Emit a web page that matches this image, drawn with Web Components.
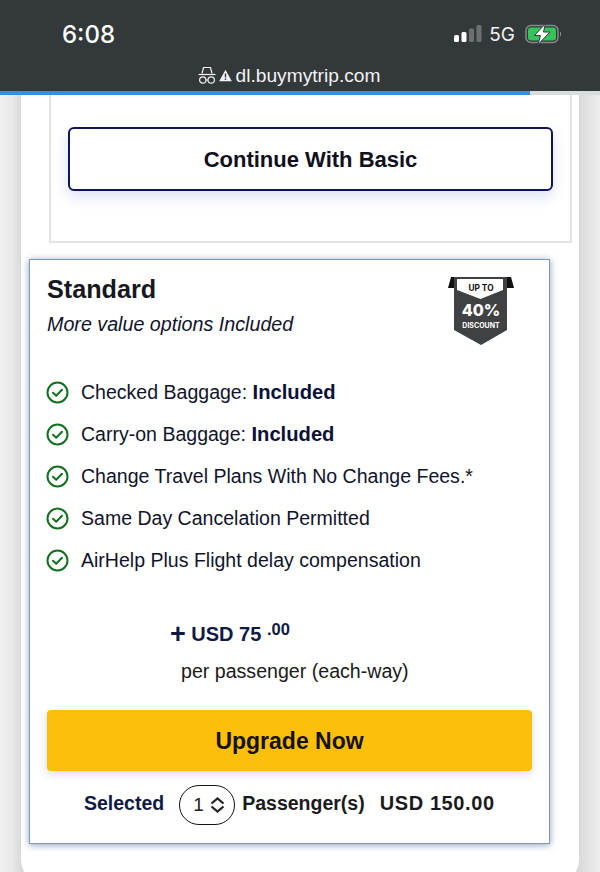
<!DOCTYPE html>
<html>
<head>
<meta charset="utf-8">
<title>Upgrade</title>
<style>
    html, body {
        margin: 0;
        height: 872px;
        overflow: hidden;
    }
    body {
        width: 600px;
        font-family: "Liberation Sans", Arial, sans-serif;
        background: linear-gradient(90deg, #f1f1f1 0, #e9e9e9 12px, #d9d9d9 21px, #d9d9d9 579px, #e4e4e4 590px, #efefef 600px);
    }
</style>
</head>
<body>
<browser-bar time="6:08" host="dl.buymytrip.com"></browser-bar>
<page-sheet>
    <basic-card>Continue With Basic</basic-card>
    <plan-card name="Standard" tagline="More value options Included" price="75" cents="00" total="USD 150.00">
        <feature-item>Checked Baggage: <b>Included</b></feature-item>
        <feature-item>Carry-on Baggage: <b>Included</b></feature-item>
        <feature-item>Change Travel Plans With No Change Fees.*</feature-item>
        <feature-item>Same Day Cancelation Permitted</feature-item>
        <feature-item>AirHelp Plus Flight delay compensation</feature-item>
    </plan-card>
</page-sheet>

<script>
customElements.define('browser-bar', class extends HTMLElement {
    connectedCallback() {
        this.attachShadow({ mode: 'open' });
        this.shadowRoot.innerHTML = `
            <style>
                :host {
                    display: block;
                    color: #fff;
                    background: #33383b;
                    font-family: Inter, "Liberation Sans", sans-serif;
                }
                .status {
                    display: flex;
                    align-items: center;
                    justify-content: space-between;
                    height: 68px;
                    padding: 0 37px 0 62px;
                }
                .time {
                    font-size: 24px;
                    font-weight: 500;
                }
                .right {
                    display: flex;
                    align-items: center;
                    gap: 7px;
                    font-size: 19px;
                    color: #f1f1f1;
                }
                .url {
                    display: flex;
                    align-items: center;
                    justify-content: center;
                    gap: 3px;
                    box-sizing: border-box;
                    height: 23px;
                    padding: 0 21px 8px 0;
                    font: 19.2px "Liberation Sans", sans-serif;
                    color: #f2f2f2;
                }
                .progress {
                    height: 4px;
                    background: linear-gradient(90deg, #3a8fd6 530px, #d8dcdf 530px);
                }
            </style>
            <div class="status">
                <span class="time">${this.getAttribute('time')}</span>
                <span class="right">
                    <svg width="28" height="18" viewBox="0 0 28 18">
                        <rect x="0" y="10" width="5" height="7" rx="1.5" fill="#fff"/>
                        <rect x="7.5" y="7" width="5" height="10" rx="1.5" fill="#fff"/>
                        <rect x="15" y="3.5" width="5" height="13.5" rx="1.5" fill="#6c7072"/>
                        <rect x="22.5" y="0" width="5" height="17" rx="1.5" fill="#6c7072"/>
                    </svg>
                    <span>5G</span>
                    <svg width="38" height="22" viewBox="0 0 38 22" style="margin-left:3px">
                        <rect x="1" y="2.5" width="32" height="17" rx="5" fill="none" stroke="#85898b" stroke-width="1.5"/>
                        <rect x="3" y="4.5" width="28" height="13" rx="3" fill="#35c45a"/>
                        <path d="M35 8.5c1.5 .4 1.5 4.6 0 5z" fill="#85898b"/>
                        <path d="M20.5 0.5L9.5 12.5h6l-2.5 9L25 9h-6.5z" fill="#fff" stroke="#33383b" stroke-width="1"/>
                    </svg>
                </span>
            </div>
            <div class="url">
                <svg width="18" height="19" viewBox="0 0 18 19" fill="none" stroke="#f2f2f2" stroke-width="1.2">
                    <path d="M4 7.5L5.500 1.500h7L14 7.500"/>
                    <path d="M.5 8.500h17"/>
                    <circle cx="4.800" cy="14" r="3.200"/>
                    <circle cx="13.200" cy="14" r="3.200"/>
                    <path d="M8 14h2"/>
                </svg>
                <svg width="13" height="13" viewBox="0 0 13 13">
                    <path d="M6.500 .8L12.800 12.200H.2z" fill="#f2f2f2"/>
                    <path d="M6.500 4.500v4M6.500 9.500v1.500" stroke="#33383b" stroke-width="1.400"/>
                </svg>
                <span>${this.getAttribute('host')}</span>
            </div>
            <div class="progress"></div>
        `;
    }
});

customElements.define('page-sheet', class extends HTMLElement {
    constructor() {
        super();
        this.attachShadow({ mode: 'open' });
        this.shadowRoot.innerHTML = `
            <style>
                :host {
                    display: flex;
                    flex-direction: column;
                    gap: 16px;
                    height: 787px;
                    margin: 0 21px;
                    padding: 0 7px 0 8px;
                    box-sizing: border-box;
                    background: #fff;
                    border-radius: 0 0 22px 22px;
                }
            </style>
            <slot></slot>
        `;
    }
});

customElements.define('basic-card', class extends HTMLElement {
    constructor() {
        super();
        this.attachShadow({ mode: 'open' });
        this.shadowRoot.innerHTML = `
            <style>
                :host {
                    display: block;
                    margin-left: 20px;
                    padding: 32px 17px 50px;
                    border: 2px solid #e2e4e7;
                    border-top: 0;
                }
                button {
                    display: block;
                    width: 100%;
                    height: 64px;
                    padding: 2px 0 0;
                    font: 700 22px "Liberation Sans", sans-serif;
                    color: #10101c;
                    background: #fff;
                    border: 2px solid #11145a;
                    border-radius: 6px;
                    box-shadow: 0 6px 14px rgba(40, 70, 190, .16);
                }
            </style>
            <button><slot></slot></button>
        `;
    }
});

customElements.define('discount-badge', class extends HTMLElement {
    constructor() {
        super();
        this.attachShadow({ mode: 'open' });
        this.shadowRoot.innerHTML = `
            <style>
                :host {
                    display: block;
                    width: 66px;
                    height: 69px;
                }
                svg {
                    display: block;
                }
                text {
                    font-family: Inter, "Liberation Sans", sans-serif;
                    font-weight: 700;
                    text-anchor: middle;
                }
            </style>
            <svg width="66" height="69" viewBox="0 0 66 69">
                <path d="M0 11L3 0h60l3 11z" fill="#111"/>
                <path d="M6 0h53v53L33 68 6 53z" fill="#3f4142"/>
                <path d="M9 2h46v11L32.500 22 9 13z" fill="#fff"/>
                <text x="33" y="14" font-size="8.300" fill="#111">UP TO</text>
                <text x="33" y="39" font-size="16" style="font-weight:800" fill="#fff">40%</text>
                <text x="33" y="51" font-size="7" fill="#fff">DISCOUNT</text>
            </svg>
        `;
    }
});

customElements.define('feature-item', class extends HTMLElement {
    constructor() {
        super();
        this.attachShadow({ mode: 'open' });
        this.shadowRoot.innerHTML = `
            <style>
                :host {
                    display: flex;
                    align-items: center;
                    gap: 12px;
                    height: 42px;
                    font-size: 19.55px;
                    color: #11132b;
                }
                svg {
                    flex: none;
                    margin-left: -1px;
                }
                ::slotted(b) {
                    color: #0b1038;
                    font-size: 20.2px;
                }
            </style>
            <svg width="23" height="23" viewBox="0 0 23 23" fill="none" stroke="#12701f" stroke-width="2">
                <circle cx="11.500" cy="11.500" r="10"/>
                <path d="M7 11.800l3.200 3 5.800-6" stroke-linecap="round" stroke-linejoin="round"/>
            </svg>
            <span><slot></slot></span>
        `;
    }
});

customElements.define('pax-select', class extends HTMLElement {
    constructor() {
        super();
        this.attachShadow({ mode: 'open' });
        this.shadowRoot.innerHTML = `
            <style>
                :host {
                    display: inline-flex;
                    align-items: center;
                    gap: 6px;
                    box-sizing: border-box;
                    width: 56px;
                    height: 40px;
                    padding-left: 13px;
                    font-size: 19px;
                    font-weight: 400;
                    color: #222;
                    border: 1.3px solid #111;
                    border-radius: 20px;
                }
            </style>
            <span>1</span>
            <svg width="15" height="16" viewBox="0 0 15 16" fill="none" stroke="#222" stroke-width="2.200">
                <path d="M1.500 6.500L7.500 1.500l6 5M1.500 9.500l6 5 6-5"/>
            </svg>
        `;
    }
});

customElements.define('plan-card', class extends HTMLElement {
    connectedCallback() {
        this.attachShadow({ mode: 'open' });
        this.shadowRoot.innerHTML = `
            <style>
                :host {
                    display: block;
                    box-sizing: border-box;
                    width: 521px;
                    height: 585px;
                    padding: 0 17px;
                    color: #11132b;
                    background: #fff;
                    border: 1px solid #7f9ab2;
                    box-shadow: 0 1px 7px rgba(60, 100, 140, .6);
                }
                .head {
                    display: flex;
                    justify-content: space-between;
                    height: 90px;
                }
                .head h2 {
                    margin: 14px 0 0;
                    font-size: 25.2px;
                    line-height: 30px;
                    color: #17181f;
                }
                .head p {
                    margin: 8px 0 0;
                    font-size: 19.7px;
                    font-style: italic;
                    line-height: 24px;
                }
                discount-badge {
                    margin: 17px 18px 0 0;
                }
                .features {
                    margin-top: 21px;
                }
                .price {
                    margin: 38px 0 0 123px;
                    height: 30px;
                    font-size: 20px;
                    font-weight: 700;
                    line-height: 30px;
                    color: #0f1a44;
                }
                .price i {
                    font-style: normal;
                    font-size: 27px;
                    vertical-align: -2px;
                }
                .price sup {
                    font-size: 16.5px;
                    line-height: 0;
                    vertical-align: 6px;
                }
                .per {
                    margin: 10px 0 0 134px;
                    font-size: 19.6px;
                    line-height: 24px;
                    color: #1a1a20;
                }
                button {
                    display: block;
                    width: 100%;
                    height: 61px;
                    margin-top: 27px;
                    padding: 2px 0 0;
                    font: 700 23px "Liberation Sans", sans-serif;
                    color: #14120c;
                    background: #fdbf0a;
                    border: 0;
                    border-radius: 4px;
                    box-shadow: 0 3px 8px rgba(60, 80, 160, .2);
                }
                .foot {
                    display: flex;
                    align-items: center;
                    height: 40px;
                    margin: 13px 0 0 37px;
                    font-size: 19.5px;
                    font-weight: 700;
                    color: #1a1a20;
                    white-space: nowrap;
                }
                .foot span {
                    margin-bottom: 2px;
                }
                .foot pax-select {
                    margin-top: 2px;
                }
                .foot .sel {
                    margin-right: 15px;
                    color: #0f1a44;
                }
                .foot .pass {
                    margin-left: 7px;
                    margin-right: 15px;
                }
                .foot .total {
                    font-size: 20px;
                    letter-spacing: .6px;
                }
            </style>
            <div class="head">
                <div>
                    <h2>${this.getAttribute('name')}</h2>
                    <p>${this.getAttribute('tagline')}</p>
                </div>
                <discount-badge></discount-badge>
            </div>
            <div class="features"><slot></slot></div>
            <div class="price"><i>+</i> USD ${this.getAttribute('price')} <sup>.${this.getAttribute('cents')}</sup></div>
            <div class="per">per passenger (each-way)</div>
            <button>Upgrade Now</button>
            <div class="foot">
                <span class="sel">Selected</span>
                <pax-select></pax-select>
                <span class="pass">Passenger(s)</span>
                <span class="total">${this.getAttribute('total')}</span>
            </div>
        `;
    }
});
</script>
</body>
</html>
